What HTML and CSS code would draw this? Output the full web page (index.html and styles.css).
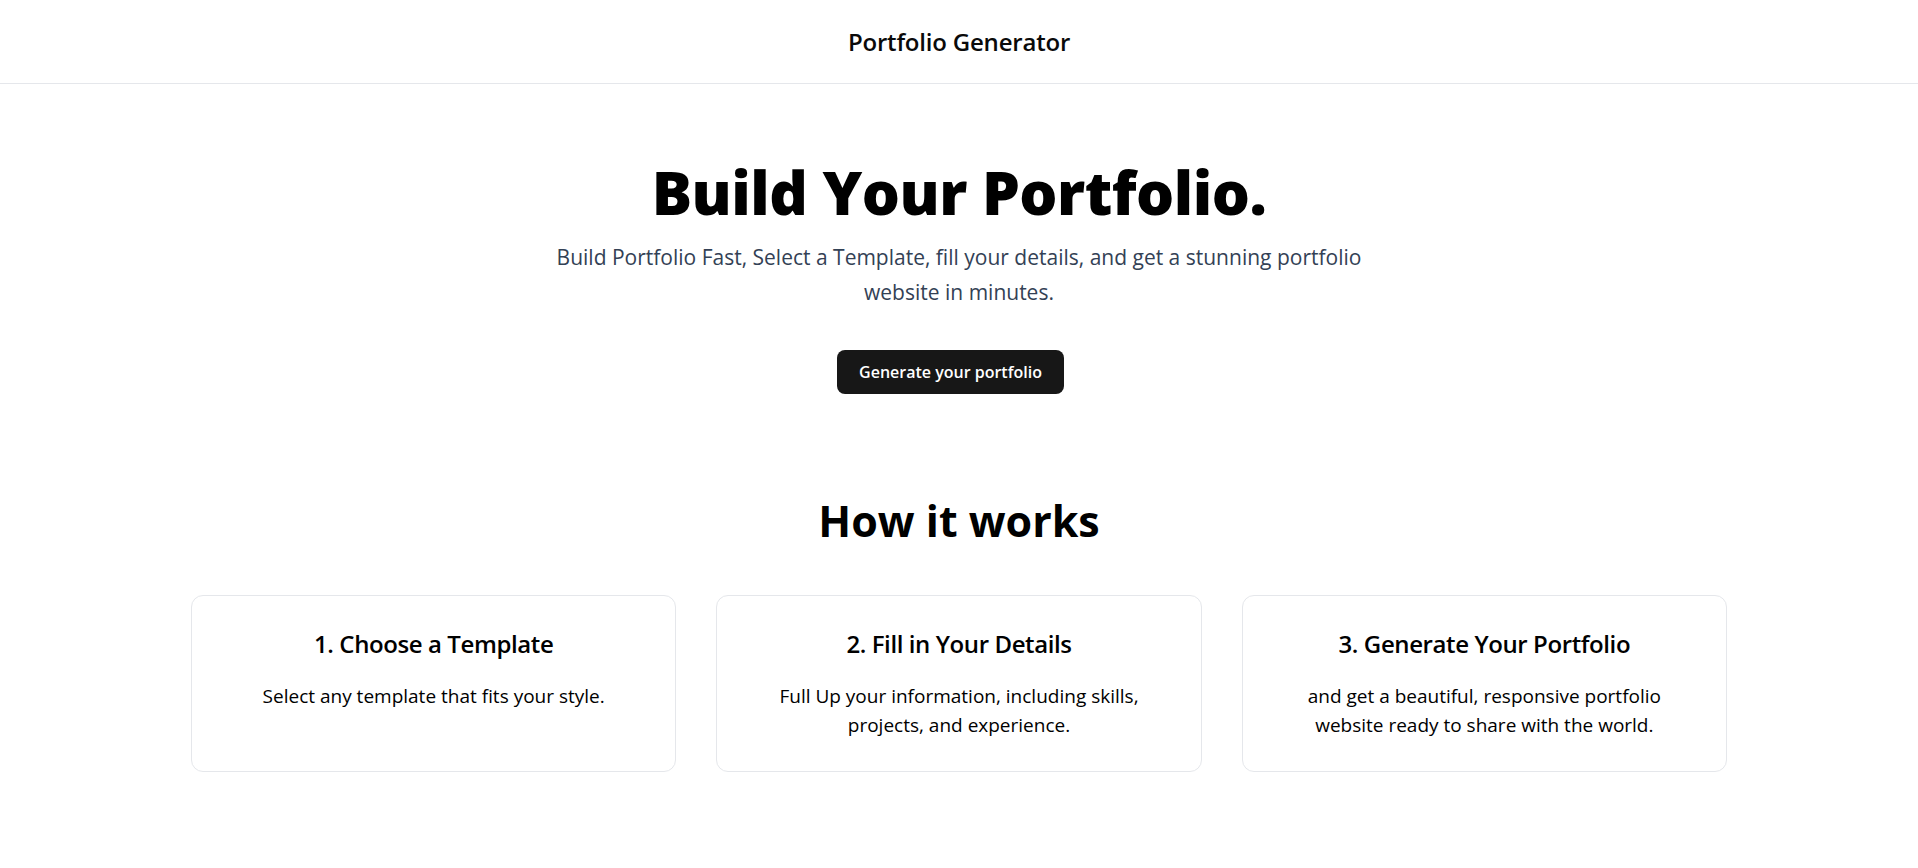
FILE: index.html
```html
<!DOCTYPE html>
<html lang="en">
<head>
<meta charset="utf-8">
<title>Portfolio Generator</title>
<link rel="stylesheet" href="styles.css">
</head>
<body>
  <header class="topbar">
    <span class="brand">Portfolio Generator</span>
  </header>
  <main class="page">
    <section class="hero">
      <h1 class="hero-title">Build Your Portfolio.</h1>
      <p class="hero-sub">Build Portfolio Fast, Select a Template, fill your details, and get a stunning portfolio website in minutes.</p>
      <button class="cta" type="button">Generate your portfolio</button>
    </section>
    <section class="how">
      <h2 class="how-title">How it works</h2>
      <div class="steps">
        <div class="step">
          <h3 class="step-title">1. Choose a Template</h3>
          <p class="step-text">Select any template that fits your style.</p>
        </div>
        <div class="step">
          <h3 class="step-title">2. Fill in Your Details</h3>
          <p class="step-text">Full Up your information, including skills, projects, and experience.</p>
        </div>
        <div class="step">
          <h3 class="step-title">3. Generate Your Portfolio</h3>
          <p class="step-text">and get a beautiful, responsive portfolio website ready to share with the world.</p>
        </div>
      </div>
    </section>
  </main>
</body>
</html>
```

FILE: styles.css
```css
* {
  box-sizing: border-box;
}

html, body {
  margin: 0;
  padding: 0;
  background: #ffffff;
}

body {
  font-family: "Open Sans", "Noto Sans", "Liberation Sans", sans-serif;
  color: #000000;
}

.topbar {
  height: 84px;
  border-bottom: 1px solid #e5e7eb;
  display: flex;
  align-items: center;
  justify-content: center;
}

.brand {
  font-size: 24px;
  font-weight: 600;
  color: #0a0a0a;
  letter-spacing: -0.2px;
}

.page {
  display: flex;
  flex-direction: column;
  align-items: center;
}

.hero {
  display: flex;
  flex-direction: column;
  align-items: center;
  text-align: center;
  padding-top: 78px;
}

.hero-title {
  margin: 0;
  font-size: 60px;
  line-height: 60px;
  font-weight: 800;
  letter-spacing: -0.5px;
  color: #000000;
}

.hero-sub {
  margin: 18px 0 0;
  max-width: 840px;
  font-size: 21px;
  line-height: 35px;
  color: #334155;
}

.cta {
  margin-top: 40px;
  margin-right: 17px;
  height: 44px;
  padding: 0 22px;
  border: none;
  border-radius: 8px;
  background: #171717;
  color: #ffffff;
  font-family: inherit;
  font-size: 16px;
  font-weight: 600;
}

.how {
  width: 100%;
  max-width: 1536px;
  display: flex;
  flex-direction: column;
  align-items: center;
  padding-top: 105px;
}

.how-title {
  margin: 0;
  font-size: 43px;
  line-height: 44px;
  font-weight: 700;
}

.steps {
  margin-top: 52px;
  width: 100%;
  display: grid;
  grid-template-columns: repeat(3, 1fr);
  gap: 40px;
}

.step {
  border: 1px solid #e5e7eb;
  border-radius: 12px;
  padding: 32px 36px 31px;
  text-align: center;
}

.step-title {
  margin: 0;
  font-size: 24px;
  line-height: 32px;
  font-weight: 600;
  letter-spacing: -0.4px;
}

.step-text {
  margin: 22px 0 0;
  font-size: 19px;
  line-height: 29px;
}
```
